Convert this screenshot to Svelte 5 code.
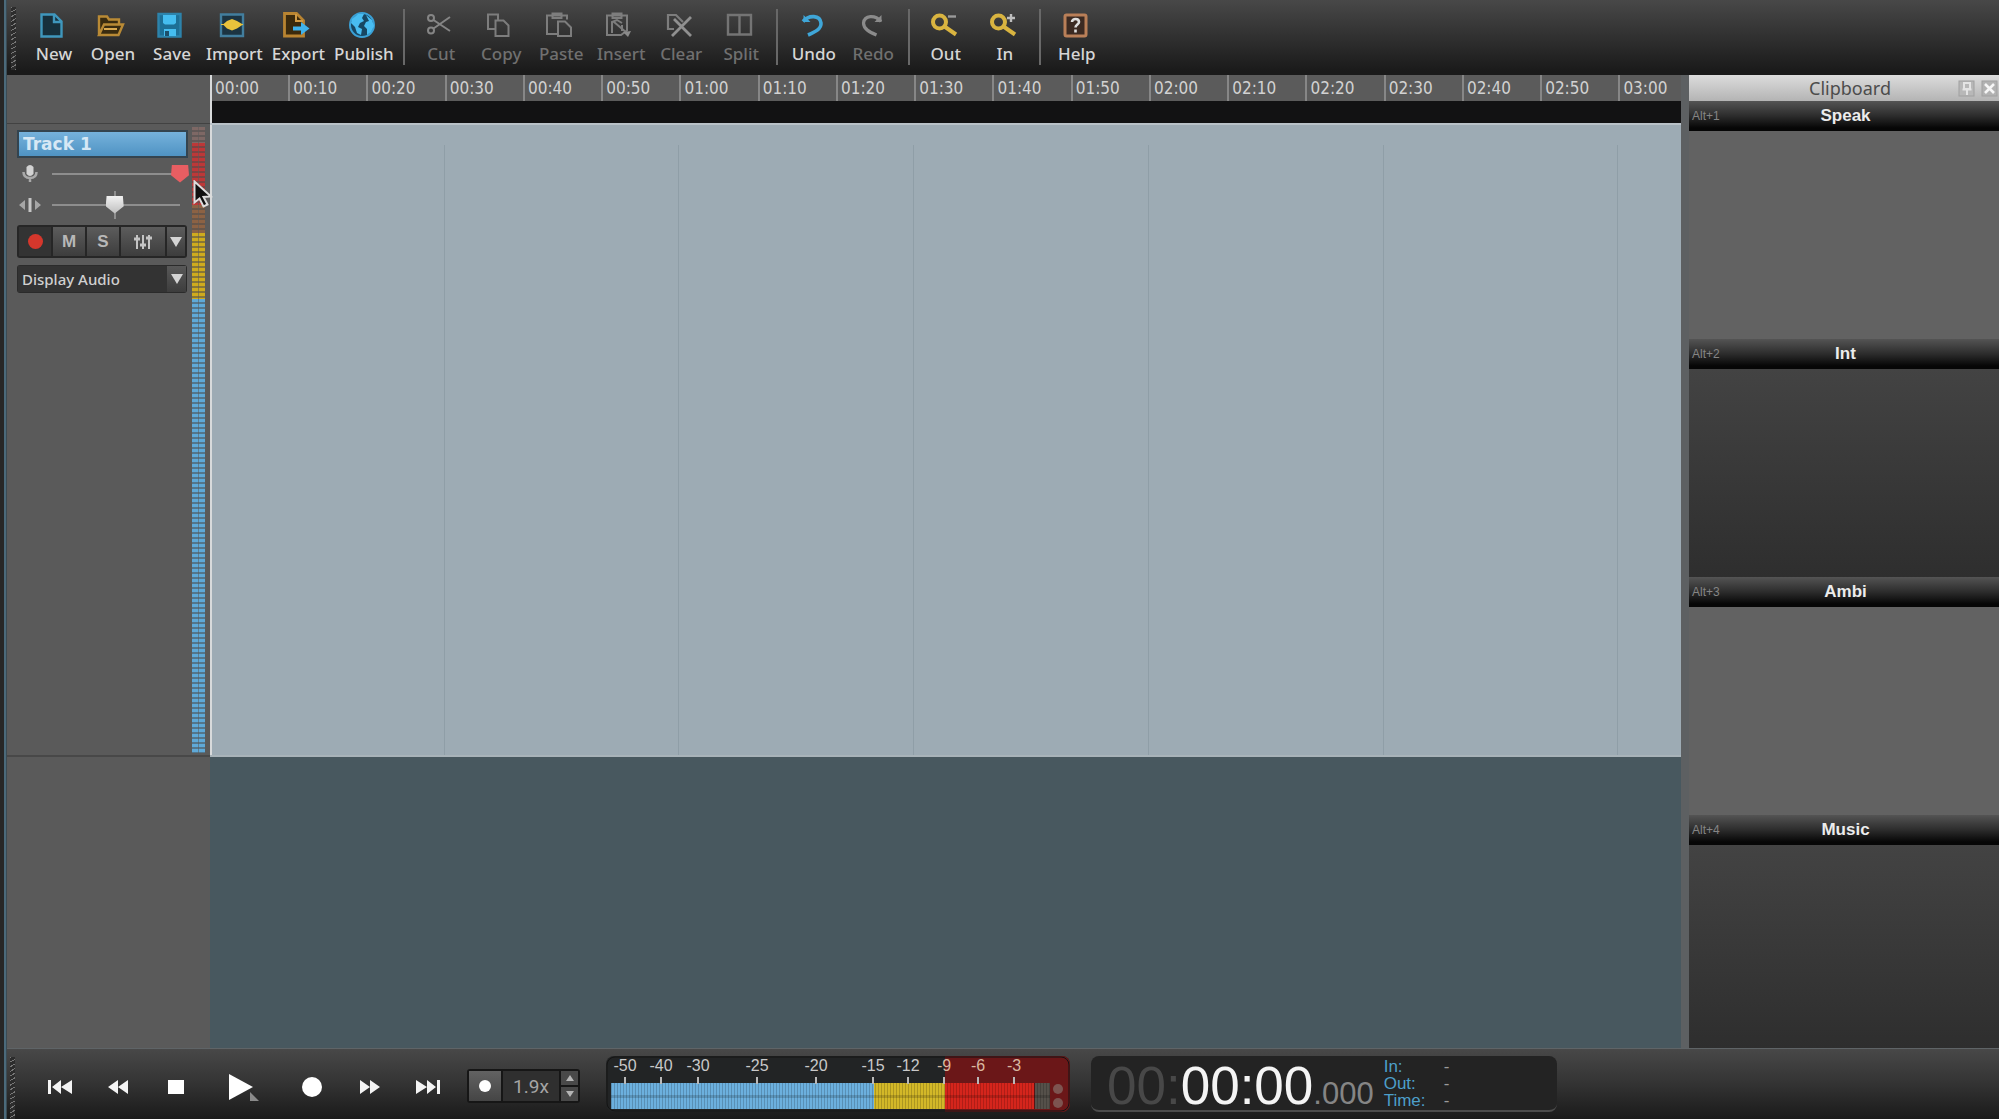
<script>
  const groups = [
    [
      { id: 'new', label: 'New' },
      { id: 'open', label: 'Open' },
      { id: 'save', label: 'Save' },
      { id: 'import', label: 'Import' },
      { id: 'export', label: 'Export' },
      { id: 'publish', label: 'Publish' }
    ],
    [
      { id: 'cut', label: 'Cut', dim: true },
      { id: 'copy', label: 'Copy', dim: true },
      { id: 'paste', label: 'Paste', dim: true },
      { id: 'insert', label: 'Insert', dim: true },
      { id: 'clear', label: 'Clear', dim: true },
      { id: 'split', label: 'Split', dim: true }
    ],
    [
      { id: 'undo', label: 'Undo' },
      { id: 'redo', label: 'Redo', dim: true }
    ],
    [
      { id: 'out', label: 'Out' },
      { id: 'in', label: 'In' }
    ],
    [{ id: 'help', label: 'Help' }]
  ];

  const times = Array.from({ length: 19 }, (_, i) => {
    const s = i * 10;
    return String(Math.floor(s / 60)).padStart(2, '0') + ':' + String(s % 60).padStart(2, '0');
  });

  const slots = [
    { key: 'Alt+1', name: 'Speak' },
    { key: 'Alt+2', name: 'Int' },
    { key: 'Alt+3', name: 'Ambi' },
    { key: 'Alt+4', name: 'Music' }
  ];

  const levels = [
    { x: 19, db: '-50' }, { x: 55, db: '-40' }, { x: 92, db: '-30' },
    { x: 151, db: '-25' }, { x: 210, db: '-20' }, { x: 267, db: '-15' },
    { x: 302, db: '-12' }, { x: 338, db: '-9' }, { x: 372, db: '-6' }, { x: 408, db: '-3' }
  ];

  const marks = [{ name: 'In:' }, { name: 'Out:' }, { name: 'Time:' }];

  let gain = $state(100);
  let pan = $state(49);
  let trackName = $state('Track 1');
  let speed = $state('1.9x');
</script>

{#snippet icon(id)}
  <svg class="icon" viewBox="0 0 28 26" width="28" height="26" fill="none" stroke-width="2.4" aria-hidden="true">
    {#if id === 'new'}
      <path d="M3.5 2.5h13l7 7v15h-20z" fill="#17303c" stroke="#3f97bd" />
      <path d="M16 3v7h7" stroke="#3f97bd" />
    {:else if id === 'open'}
      <path d="M2 23V4.5h8l2 3h10v5M2 23l5-10.500h19L21.500 23z" fill="#3a2c10" stroke="#b98a35" />
      <path d="M7 17h13" stroke="#d9a94f" stroke-width="2" />
    {:else if id === 'save'}
      <path d="M2.500 2h22v22.500h-22z" fill="#1d6f96" stroke="#2d83ab" />
      <path d="M7 3h13v8l-2 1.500H9L7 11z" fill="#45bdf0" />
      <path d="M8 17h12v7H8z" fill="#45bdf0" />
      <path d="M9 19h4v5H9z" fill="#1d4f6a" />
    {:else if id === 'import'}
      <path d="M3 2.500h22v21.500H3z" fill="#1c3442" stroke="#427e9e" />
      <path d="M5 12.500l4-3.500 5-2 5 2 6 3.500-6 4-5 2-5-2z" fill="#e8c23c" />
      <path d="M3 12.500h22" stroke="#e8c23c" stroke-width="1" />
    {:else if id === 'export'}
      <path d="M2.500 1.500h12l7 7v15.500h-19z" fill="#3b2a0d" stroke="#b98431" stroke-width="2.800" />
      <path d="M14 2v7h7" stroke="#d09a45" stroke-width="2" />
      <path d="M11 14.500h8V10l8.500 6.500-8.500 6.500v-4.500h-8z" fill="#3fb2ec" />
    {:else if id === 'publish'}
      <circle cx="14" cy="13" r="12" fill="#174763" stroke="#3aa0d6" stroke-width="2" />
      <path d="M4 7l6-5 6 0-2 4 2 3-4 2-2 4 4 2-1 6-4-2-2-6-4-4zM18 3l6 5 2 6-3 6-4 3 0-6-3-3 2-4 3-1z" fill="#48bdf2" />
    {:else if id === 'cut'}
      <g stroke="#858585" stroke-width="2">
        <circle cx="6" cy="6" r="3" /><circle cx="6" cy="18.500" r="3" />
        <path d="M8.500 8L25 19M8.500 16.500L25 5" />
      </g>
    {:else if id === 'copy'}
      <g stroke="#7d7d7d" stroke-width="2">
        <path d="M10 17H3V2.500h10V8" />
        <path d="M10.500 8.500h8l5 5V24h-13z" />
      </g>
    {:else if id === 'paste'}
      <g stroke="#7d7d7d" stroke-width="2">
        <path d="M12 22H2V3.500h20v4M7.500 1.500h9V6h-9z" />
        <path d="M13 9.500h7l6 6V24H13z" />
      </g>
    {:else if id === 'insert'}
      <g stroke="#7d7d7d" stroke-width="2">
        <path d="M2 3.500h20v15L16 23H2zM7.500 1.500h9V6h-9z" />
        <path d="M7 21V10l5-2 5 3M9 10l13 11M17 13v6" />
      </g>
      <path d="M18 20l8-1-3 6z" fill="#8a8a8a" />
    {:else if id === 'clear'}
      <g stroke="#7d7d7d" stroke-width="2.200">
        <path d="M9 17H3V3h8l7 7" />
        <path d="M26 5L7 24M9 7l17 17" stroke="#909090" stroke-width="2.800" />
      </g>
    {:else if id === 'split'}
      <path d="M3 3h23v19.500H3zM14.500 3v19.500" stroke="#747474" stroke-width="2.400" />
    {:else if id === 'undo'}
      <path d="M5.500 3v7h7z" fill="#3fa6d8" />
      <path d="M5 9.500C11 2.500 22 3 23 11c.500 6-6 9-13 12" stroke="#3fa6d8" stroke-width="3.600" />
    {:else if id === 'redo'}
      <path d="M24.500 3v7h-7z" fill="#8b8b8b" />
      <path d="M24 9.500C18 2.500 7.500 3 6.500 11c0 6 6 9 13 12" stroke="#8b8b8b" stroke-width="3.200" />
    {:else if id === 'out' || id === 'in'}
      <circle cx="9.500" cy="10" r="6.500" stroke="#d9b440" stroke-width="4" />
      <path d="M14.500 14.500L26 22.500" stroke="#d9b440" stroke-width="4" />
      {#if id === 'out'}
        <path d="M18 4.500h8" stroke="#9a9a9a" stroke-width="2.400" />
      {:else}
        <path d="M18 6h8M22 2v8" stroke="#bdbdbd" stroke-width="2.400" />
      {/if}
    {:else if id === 'help'}
      <rect x="4" y="3" width="21" height="21" rx="1.500" fill="#3b2a22" stroke="#b97f58" stroke-width="3" />
      <path d="M11 10c0-4 7-4 7 0 0 2.500-3.500 2.500-3.500 5.500M14.500 17.500v3" stroke="#dedede" stroke-width="2.600" />
    {/if}
  </svg>
{/snippet}

<div class="app">
  <header class="toolbar">
    <span class="grip"></span>
    {#each groups as group, g}
      {#if g > 0}<span class="sep"></span>{/if}
      {#each group as item}
        <button class="tool" class:dim={item.dim}>
          {@render icon(item.id)}
          <span>{item.label}</span>
        </button>
      {/each}
    {/each}
  </header>

  <main class="work">
    <aside class="side">
      <div class="side-top"></div>
      <section class="track">
        <div class="controls">
          <input class="name" type="text" aria-label="Track name" bind:value={trackName} />
          <label class="row">
            <svg width="26" height="24" viewBox="0 0 26 24" aria-label="Volume">
              <path d="M9.500 5q3.500-4 7 0v7q-3.500 4-7 0z" fill="#d2d2d2" />
              <path d="M6.500 10q0 6 6.500 6t6.500-6M13 16v4" fill="none" stroke="#a9a9a9" stroke-width="2.500" />
            </svg>
            <input class="slider gain" type="range" min="0" max="100" bind:value={gain} />
          </label>
          <label class="row">
            <svg width="26" height="24" viewBox="0 0 26 24" aria-label="Pan">
              <path d="M8 7v10l-6-5zM18 7v10l6-5z" fill="#a6a6a6" />
              <path d="M13 5v14" stroke="#c6c6c6" stroke-width="3" />
            </svg>
            <input class="slider pan" type="range" min="0" max="100" bind:value={pan} />
          </label>
          <div class="modes">
            <button class="rec" aria-label="Arm recording"><i></i></button>
            <button>M</button>
            <button>S</button>
            <button class="wide" aria-label="Mixer">
              <svg width="20" height="18" viewBox="0 0 20 18" stroke="#c4c4c4" stroke-width="2">
                <path d="M4 2v14M10 2v14M16 2v14" />
                <path d="M1 6h6M7 12h6M13 5h6" stroke-width="3" />
              </svg>
            </button>
            <button class="drop" aria-label="More">
              <svg width="12" height="10" viewBox="0 0 12 10"><path d="M0 0h12L6 10z" fill="#d4d4d4" /></svg>
            </button>
          </div>
          <div class="display">
            <select aria-label="Track display">
              <option>Display Audio</option>
            </select>
            <span class="drop">
              <svg width="12" height="10" viewBox="0 0 12 10"><path d="M0 0h12L6 10z" fill="#d4d4d4" /></svg>
            </span>
          </div>
        </div>
        <div class="vu">
          <span class="peak"></span>
          <span class="hot"></span>
          <span class="warm"></span>
          <span class="mid"></span>
          <span class="cool"></span>
        </div>
        <svg class="pointer" width="20" height="28" viewBox="0 0 20 28" aria-hidden="true">
          <path d="M1.500 1.500v21l5-4 4 8 4-2-4-7.500 7.500-.500z" fill="#101010" stroke="#dcdcdc" stroke-width="2" />
        </svg>
      </section>
      <div class="side-rest"></div>
    </aside>

    <section class="timeline">
      <div class="ruler">
        {#each times as t}<span>{t}</span>{/each}
      </div>
      <div class="band"></div>
      <div class="lane">
        {#each [1, 2, 3, 4, 5, 6] as n}<i></i>{/each}
      </div>
      <div class="empty"></div>
    </section>

    <aside class="clipboard">
      <header class="title">
        <h2>Clipboard</h2>
        <button aria-label="Pin">
          <svg width="17" height="17" viewBox="0 0 17 17" fill="none" stroke="#e4e4e4">
            <rect x="1" y="1" width="15" height="15" stroke="#a0a0a0" fill="#b8b8b8" />
            <path d="M6 3h6v6H6zM4.500 9.500h9M9 10v5" stroke-width="2" />
          </svg>
        </button>
        <button aria-label="Close">
          <svg width="17" height="17" viewBox="0 0 17 17" fill="none">
            <rect x="1" y="1" width="15" height="15" stroke="#a0a0a0" fill="#b2b2b2" />
            <path d="M4 4l9 9M13 4l-9 9" stroke="#f6f6f6" stroke-width="2.600" />
          </svg>
        </button>
      </header>
      <div class="slots">
        {#each slots as slot}
          <section class="slot">
            <header><kbd>{slot.key}</kbd><h3>{slot.name}</h3></header>
            <div class="drop-zone"></div>
          </section>
        {/each}
      </div>
    </aside>
  </main>

  <footer class="transport">
    <span class="grip"></span>
    <div class="keys">
      <button aria-label="Go to start">
        <svg width="26" height="14" viewBox="0 0 26 14" fill="#f4f4f4"><path d="M1 0h3v14H1zM14 0v14L5 7zM25 0v14L14 7z" /></svg>
      </button>
      <button aria-label="Rewind">
        <svg width="20" height="14" viewBox="0 0 20 14" fill="#f4f4f4"><path d="M10 0v14L0 7zM20 0v14L10 7z" /></svg>
      </button>
      <button aria-label="Stop">
        <svg width="16" height="14" viewBox="0 0 16 14"><path d="M0 0h16v14H0z" fill="#fff" /></svg>
      </button>
      <button class="play" aria-label="Play">
        <svg width="32" height="30" viewBox="0 0 32 30"><path d="M1 2l24 13L1 28z" fill="#fff" /><path d="M22 20l9 9h-9z" fill="#8a8a8a" /></svg>
      </button>
      <button aria-label="Record">
        <svg width="20" height="20" viewBox="0 0 20 20"><circle cx="10" cy="10" r="10" fill="#fff" /></svg>
      </button>
      <button aria-label="Fast forward">
        <svg width="20" height="14" viewBox="0 0 20 14" fill="#f4f4f4"><path d="M10 0v14l10-7zM0 0v14l10-7z" /></svg>
      </button>
      <button aria-label="Go to end">
        <svg width="26" height="14" viewBox="0 0 26 14" fill="#f4f4f4"><path d="M22 0h3v14h-3zM12 0v14l9-7zM1 0v14l11-7z" /></svg>
      </button>
    </div>

    <div class="speed">
      <button class="toggle" aria-label="Variable speed"><i></i></button>
      <input type="text" aria-label="Speed" bind:value={speed} />
      <div class="steps">
        <button aria-label="Faster"><svg width="8" height="6" viewBox="0 0 8 6"><path d="M4 0l4 6H0z" fill="#b5b5b5" /></svg></button>
        <button aria-label="Slower"><svg width="8" height="6" viewBox="0 0 8 6"><path d="M0 0h8L4 6z" fill="#b5b5b5" /></svg></button>
      </div>
    </div>

    <svg class="levels" width="464" height="56" viewBox="0 0 464 56" role="img" aria-label="Output level">
      <defs>
        <clipPath id="case"><rect width="464" height="56" rx="8" /></clipPath>
        <pattern id="bars" width="3" height="26" patternUnits="userSpaceOnUse" y="27">
          <path d="M2 0h1v26H2z" fill="#000" opacity=".18" />
          <path d="M0 12h3v3H0z" fill="#000" opacity=".16" />
        </pattern>
      </defs>
      <g clip-path="url(#case)">
        <rect width="464" height="56" fill="#222425" />
        <rect x="339" width="125" height="56" fill="#6b1718" />
        <rect x="5" y="27" width="263" height="26" fill="#6cb0de" />
        <rect x="268" y="27" width="71" height="26" fill="#d3b828" />
        <rect x="339" y="27" width="89" height="26" fill="#d5251c" />
        <rect x="429" y="27" width="15" height="26" fill="#55504a" />
        <rect x="5" y="27" width="439" height="26" fill="url(#bars)" />
        <circle cx="452" cy="33" r="5" fill="#7d5450" />
        <circle cx="452" cy="47" r="5" fill="#7d5450" />
      </g>
      {#each levels as l}
        <text x={l.x} y="15" class:hotlabel={l.x > 330}>{l.db}</text>
        <path d="M{l.x} 21v7" stroke="#b9b9b9" stroke-width="2" />
      {/each}
      <rect x="1" y="1" width="462" height="54" rx="8" fill="none" stroke="#141414" />
    </svg>

    <div class="clock">
      <div class="digits"><span class="hours">00:</span><span class="now">00:00</span><span class="ms">.000</span></div>
      <dl>
        {#each marks as m}<dt>{m.name}</dt><dd>-</dd>{/each}
      </dl>
    </div>
  </footer>
</div>

<style>
  :global(body) { background: #252525; }
  * { box-sizing: border-box; }
  h2, h3, dl, dd { margin: 0; }
  button { border: 0; padding: 0; background: none; color: inherit; font: inherit; }
  svg { display: block; flex: none; }

  .app {
    display: flex;
    flex-direction: column;
    min-height: 100vh;
    padding-left: 7px;
    background: linear-gradient(90deg, #272727 4px, #4b6a7b 4px, #4b6a7b 6px, #3b4b54 6px);
    font-family: "Noto Sans", "Open Sans", sans-serif;
    font-size: 17px;
    color: #d6d6d6;
  }

  .toolbar {
    display: flex;
    gap: 9px;
    height: 75px;
    padding: 0 4px;
    background: linear-gradient(#484848, #303030 50%, #1a1a1a 95%, #1a1a1a);
  }
  .grip {
    flex: none;
    width: 5px;
    margin: 7px 4px 5px 0;
    background: repeating-linear-gradient(150deg, #777 0 1px, #2c2c2c 1px 4px);
  }
  .sep { width: 2px; margin: 9px 2px 10px 0; background: #686868; }
  .tool {
    display: flex;
    flex-direction: column;
    align-items: center;
    gap: 4px;
    min-width: 50px;
    padding-top: 12px;
    line-height: 24px;
    font-weight: 500;
  }
  .tool .icon { margin-right: 4px; overflow: visible; }
  .tool.dim { min-width: 51px; color: #707070; }

  .work { display: flex; flex: 1; background: #5a5a5a; }

  .side {
    display: flex;
    flex-direction: column;
    width: 203px;
    background: #5a5a5a;
  }
  .side-top { height: 49px; border-bottom: 1px solid #424242; }
  .track {
    position: relative;
    display: flex;
    justify-content: space-between;
    height: 633px;
    padding: 3px 5px 2px 10px;
    border-bottom: 2px solid #484848;
  }
  .side-rest { flex: 1; }

  .controls { display: flex; flex-direction: column; width: 171px; padding-top: 3px; }
  .name {
    width: 100%;
    height: 28px;
    padding: 0 4px 1px;
    border: 2px solid #34444f;
    background: linear-gradient(#76b2dc, #4f93c3);
    color: #d6e8f5;
    font: bold 17px "DejaVu Sans", sans-serif;
  }
  .row { display: flex; align-items: center; height: 31px; }
  .slider {
    appearance: none;
    flex: none;
    width: 146px;
    height: 28px;
    margin: 0;
    background: linear-gradient(#8e8e8e, #8e8e8e) center / calc(100% - 18px) 2px no-repeat;
  }
  .slider.pan {
    background:
      linear-gradient(#8e8e8e, #8e8e8e) center / calc(100% - 18px) 2px no-repeat,
      linear-gradient(#8e8e8e, #8e8e8e) 49% / 2px 100% no-repeat;
  }
  .slider::-webkit-slider-thumb {
    appearance: none;
    width: 18px;
    height: 18px;
    background: linear-gradient(#f2f2f2, #bdbdbd);
    clip-path: polygon(5% 0, 95% 0, 100% 60%, 50% 100%, 0 60%);
  }
  .slider.gain::-webkit-slider-thumb { background: #e85e62; }

  .modes {
    display: flex;
    gap: 2px;
    width: 170px;
    height: 33px;
    margin: 5px 0 7px;
    padding: 2px;
    border-radius: 3px;
    background: #262626;
    font: bold 17px "Liberation Sans", sans-serif;
    color: #b8b8b8;
  }
  .modes button {
    display: flex;
    flex: 1;
    align-items: center;
    justify-content: center;
    background: linear-gradient(#5c5c5c, #3d3d3d);
  }
  .modes .rec { background: #333; }
  .modes .rec i { width: 15px; height: 15px; border-radius: 50%; background: #d5372c; }
  .modes .wide { flex: none; width: 44px; }
  .modes .drop { flex: none; width: 18px; }

  .display {
    display: flex;
    width: 170px;
    height: 28px;
    padding: 1px;
    border-radius: 3px;
    background: #2b2b2b;
  }
  .display select {
    appearance: none;
    flex: 1;
    min-width: 0;
    padding: 0 4px;
    border: 0;
    background: #333;
    color: #d0d0d0;
    font: 500 15px "Noto Sans", sans-serif;
  }
  .display .drop {
    display: flex;
    align-items: center;
    justify-content: center;
    width: 19px;
    background: linear-gradient(#585858, #3d3d3d);
  }

  .vu { display: flex; flex-direction: column; width: 13px; }
  .vu span {
    background-image:
      linear-gradient(90deg, transparent 6px, #5a5a5a88 6px, #5a5a5a88 7px, transparent 7px),
      repeating-linear-gradient(transparent 0 3px, #4a4a4a88 3px 5px);
  }
  .peak { height: 16px; background-color: #7e6865; }
  .hot { height: 62px; background-color: #bd3838; }
  .warm { height: 28px; background-color: #8c6244; }
  .mid { height: 66px; background-color: #cfab1e; }
  .cool { flex: 1; background-color: #5fa9d8; }

  .pointer { position: absolute; left: 186px; top: 56px; z-index: 1; }

  .timeline {
    display: flex;
    flex-direction: column;
    flex: 1;
    min-width: 0;
    background: #48585f;
  }
  .ruler {
    display: grid;
    grid-template-columns: repeat(18, 10fr) 8fr;
    height: 26px;
    background: #5b5b5b;
    color: #d2d2d2;
    font: 17px/27px "DejaVu Sans Condensed", "Noto Sans", sans-serif;
  }
  .ruler span { min-width: 0; padding-left: 3px; border-left: 2px solid #878787; }
  .ruler span:first-child { border-color: #d8dadb; }
  .band { height: 22px; border-left: 2px solid #d8dadb; background: #121213; }
  .lane {
    display: grid;
    grid-template-columns: repeat(6, 30fr) 8fr;
    height: 634px;
    padding-top: 20px;
    border-top: 2px solid #b9c2c8;
    border-bottom: 2px solid #a8b3b9;
    background: #9dabb4;
    box-shadow: inset 2px 0 #d8dadb;
  }
  .lane i { border-right: 1px solid #8f9ea7; }
  .empty { flex: 1; }

  .clipboard {
    display: flex;
    flex-direction: column;
    width: 318px;
    padding-left: 8px;
    background: #5d6062;
  }
  .title {
    display: flex;
    align-items: center;
    gap: 6px;
    height: 26px;
    padding: 0 1px;
    background: linear-gradient(#dcdcdc, #b4b4b4);
    color: #4c4c4c;
  }
  .title h2 { flex: 1; padding-left: 58px; font: 18px/26px "Noto Sans", sans-serif; text-align: center; }
  .slots { display: grid; flex: 1; grid-template-rows: repeat(3, 238px) 1fr; }
  .slot { display: flex; flex-direction: column; }
  .slot header {
    display: grid;
    grid-template-columns: 34px 1fr 34px;
    align-items: center;
    height: 30px;
    padding-left: 3px;
    background: linear-gradient(#545454, #2c2c2c 50%, #060606 90%);
    text-align: center;
  }
  kbd { font: 12px "Liberation Sans", sans-serif; color: #858585; text-align: left; }
  h3 { font: bold 17px "Liberation Sans", sans-serif; color: #ececec; }
  .drop-zone { flex: 1; background: #626262; }
  .slot:nth-child(even) .drop-zone { background: linear-gradient(#434343, #2e2e2e); }

  .transport {
    display: flex;
    align-items: center;
    height: 71px;
    padding-left: 3px;
    border-top: 1px solid #5f6467;
    background: linear-gradient(#484848, #333 50%, #1a1a1a);
  }
  .transport .grip { align-self: stretch; margin: 8px 0 0; }
  .keys { display: flex; align-items: center; padding: 5px 10px 0 16px; }
  .keys button { display: flex; width: 58px; justify-content: center; }
  .keys .play { width: 78px; }

  .speed {
    display: flex;
    gap: 2px;
    width: 113px;
    height: 34px;
    margin: 4px 26px 0 0;
    padding: 2px;
    border-radius: 3px;
    background: #161616;
  }
  .speed .toggle {
    display: flex;
    align-items: center;
    justify-content: center;
    width: 32px;
    background: linear-gradient(#626262, #454545);
  }
  .toggle i { width: 12px; height: 12px; border-radius: 50%; background: #fff; }
  .speed input {
    flex: 1;
    min-width: 0;
    padding: 0;
    border: 0;
    background: #2f2f2f;
    color: #a5a5a5;
    font: 19px Roboto, sans-serif;
    text-align: center;
  }
  .steps { display: flex; flex-direction: column; gap: 2px; width: 17px; }
  .steps button {
    display: flex;
    flex: 1;
    align-items: center;
    justify-content: center;
    background: #494949;
  }

  .levels text {
    fill: #c9c9c9;
    font: 16px "Liberation Sans", sans-serif;
    text-anchor: middle;
  }
  .levels .hotlabel { fill: #d9b8a0; }

  .clock {
    display: flex;
    align-items: center;
    gap: 10px;
    width: 466px;
    height: 56px;
    margin-left: 21px;
    padding-left: 16px;
    border-bottom: 2px solid #4c4c4c;
    border-radius: 8px;
    background: #232323;
    font-family: "Liberation Sans", sans-serif;
  }
  .digits { display: flex; align-items: baseline; padding-top: 5px; line-height: 54px; font-size: 53px; }
  .hours { color: #484848; }
  .now { color: #f4f4f4; }
  .ms { font-size: 31px; line-height: 31px; color: #858585; }
  dl {
    display: grid;
    grid-template-columns: 60px auto;
    color: #4d9fca;
    font-size: 17px;
    line-height: 17px;
  }
  dd { color: #9a9a9a; }
</style>
